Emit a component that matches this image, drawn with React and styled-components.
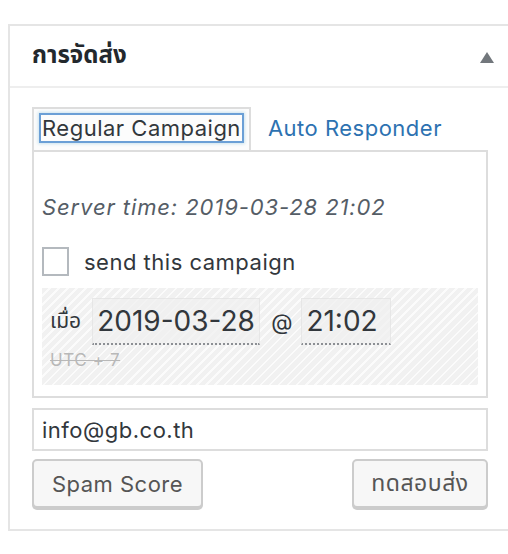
import React, { useState } from "react";
import styled, { createGlobalStyle } from "styled-components";

const GlobalStyle = createGlobalStyle`
  html, body {
    margin: 0;
    padding: 0;
    background: #fff;
    overflow: hidden;
  }
  body {
    font-family: Inter, "Noto Sans", "Noto Sans Thai", "Liberation Sans", sans-serif;
    color: #32373c;
  }
`;

const Page = styled.div`
  padding: 24px 0 0 8px;
`;

const Box = styled.div`
  width: 520px;
  border: 2px solid #e5e5e5;
  box-sizing: border-box;
  background: #fff;
`;

const Header = styled.div`
  height: 62px;
  display: flex;
  align-items: center;
  justify-content: space-between;
  padding: 0 0 0 22px;
  border-bottom: 2px solid #eeeeee;
  box-sizing: border-box;
`;

const Title = styled.h2`
  margin: 0;
  font-size: 24px;
  font-weight: 700;
  color: #23282d;
`;

const Toggle = styled.span`
  width: 0;
  height: 0;
  border-left: 7px solid transparent;
  border-right: 7px solid transparent;
  border-bottom: 11px solid #72777c;
  margin-right: 32px;
  margin-top: 2px;
`;

const Inside = styled.div`
  width: 456px;
  padding: 19px 0 21px 22px;
  font-size: 22px;
  letter-spacing: 0.5px;
`;

const Tabs = styled.div`
  display: flex;
  align-items: flex-end;
  gap: 7px;
`;

const Tab = styled.div`
  display: flex;
  align-items: center;
  height: 43px;
  box-sizing: border-box;
  padding: 0 7px 4px;
  border: ${({ $active }) => ($active ? "2px solid #dddddd" : "2px solid transparent")};
  border-bottom: none;
  background: ${({ $active }) => ($active ? "#fcfcfc" : "transparent")};
`;

const TabLink = styled.a`
  line-height: 26px;
  padding: 0 1px;
  color: ${({ $active }) => ($active ? "#32373c" : "#2d72b1")};
  text-decoration: none;
  cursor: pointer;
  white-space: nowrap;
  box-shadow: ${({ $focus }) =>
    $focus ? "0 0 0 2px #6b9fd6, 0 0 3px 3px rgba(30,140,190,0.22)" : "none"};
`;

const Panel = styled.div`
  border: 2px solid #dddddd;
  padding: 0 8px 11px;
  background: #fff;
`;

const ServerTime = styled.p`
  margin: 0;
  padding: 41px 0 0;
  line-height: 28px;
  font-style: italic;
  letter-spacing: 0.9px;
  color: #555d66;
`;

const CheckRow = styled.label`
  display: flex;
  align-items: center;
  gap: 15px;
  margin-top: 26px;
  color: #32373c;
`;

const Check = styled.span`
  width: 27px;
  height: 29px;
  box-sizing: border-box;
  border: 2px solid #b4b9be;
  background: #fff;
`;

const Schedule = styled.div`
  margin-top: 12px;
  padding: 10px 8px 15px;
  background: repeating-linear-gradient(
    135deg,
    #f1f1f1 0 4.6px,
    #fbfbfb 4.6px 6.4px
  );
`;

const WhenRow = styled.div`
  display: flex;
  align-items: center;
  gap: 11px;
  font-size: 21px;
  letter-spacing: 0;
  color: #32373c;
`;

const DateField = styled.span`
  display: inline-flex;
  align-items: center;
  height: 47px;
  width: ${({ $w }) => $w}px;
  box-sizing: border-box;
  padding: 0 3px 0 4px;
  font-size: 28px;
  letter-spacing: 0;
  white-space: nowrap;
  color: #32373c;
  background: rgba(240, 240, 240, 0.7);
  border: 1px solid rgba(225, 225, 225, 0.6);
  border-bottom: 2px dotted #8c8f94;
`;

const At = styled.span`
  font-size: 22px;
  margin: 0 -2px 0 0;
`;

const Zone = styled.div`
  margin-top: 5px;
  font-size: 17px;
  letter-spacing: 0.6px;
  color: #b8b8b8;
  text-decoration: line-through;
`;

const Email = styled.input`
  display: block;
  width: 100%;
  height: 43px;
  margin-top: 10px;
  box-sizing: border-box;
  padding: 0 8px;
  border: 2px solid #dddddd;
  font-family: inherit;
  font-size: 22px;
  letter-spacing: 0.5px;
  color: #32373c;
  outline: none;
`;

const Actions = styled.div`
  display: flex;
  justify-content: space-between;
  margin-top: 8px;
`;

const Button = styled.button`
  height: 49px;
  width: ${({ $w }) => $w}px;
  padding: 0;
  border: 2px solid #cccccc;
  border-radius: 5px;
  background: #f7f7f7;
  box-shadow: 0 2px 0 #cccccc;
  font-family: inherit;
  font-size: ${({ $thai }) => ($thai ? "23px" : "22px")};
  letter-spacing: 0.5px;
  color: #555555;
  cursor: pointer;
`;

export default function App() {
  const [email, setEmail] = useState("info@gb.co.th");

  return (
    <Page>
      <GlobalStyle />
      <Box>
        <Header>
          <Title>การจัดส่ง</Title>
          <Toggle />
        </Header>
        <Inside>
          <Tabs>
            <Tab $active>
              <TabLink $active $focus>Regular Campaign</TabLink>
            </Tab>
            <Tab>
              <TabLink>Auto Responder</TabLink>
            </Tab>
          </Tabs>
          <Panel>
            <ServerTime>Server time: 2019-03-28 21:02</ServerTime>
            <CheckRow>
              <Check />
              send this campaign
            </CheckRow>
            <Schedule>
              <WhenRow>
                เมื่อ
                <DateField $w={168}>2019-03-28</DateField>
                <At>@</At>
                <DateField $w={90}>21:02</DateField>
              </WhenRow>
              <Zone>UTC + 7</Zone>
            </Schedule>
          </Panel>
          <Email value={email} onChange={(e) => setEmail(e.target.value)} />
          <Actions>
            <Button $w={171}>Spam Score</Button>
            <Button $w={136} $thai>ทดสอบส่ง</Button>
          </Actions>
        </Inside>
      </Box>
    </Page>
  );
}
